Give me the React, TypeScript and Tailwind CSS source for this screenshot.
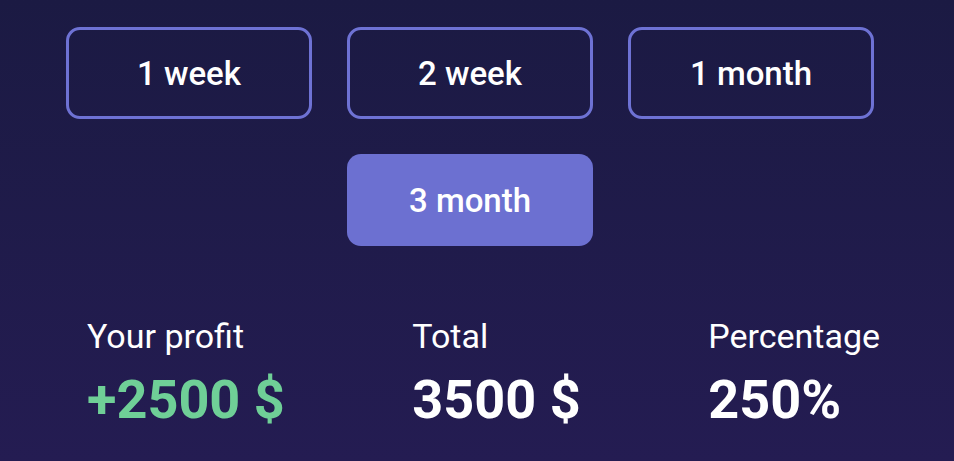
import React from "react";

const periods = ["1 week", "2 week", "1 month", "3 month"];

const stats = [
  { label: "Your profit", value: "+2500 $", color: "text-[#6fcf97]" },
  { label: "Total", value: "3500 $", color: "text-white" },
  { label: "Percentage", value: "250%", color: "text-white" },
];

const App = () => {
  const active = "3 month";

  return (
    <div
      className="w-[954px] h-[461px] overflow-hidden bg-gradient-to-b from-[#1b1a43] to-[#241c52] text-white"
      style={{ fontFamily: "Roboto, 'Liberation Sans', sans-serif" }}
    >
      <div className="flex flex-wrap justify-center gap-[35px] w-[808px] ml-[66px] pt-[27px]">
        {periods.map((p) => (
          <button
            key={p}
            className={
              p == active
                ? "w-[246px] h-[92px] rounded-[14px] bg-[#6c70d1] text-[33px] font-medium pt-[2px]"
                : "w-[246px] h-[92px] rounded-[14px] border-[3px] border-[#6e72d4] text-[33px] font-medium pt-[2px]"
            }
          >
            {p}
          </button>
        ))}
      </div>
      <div className="flex justify-between pl-[87px] pr-[74px] mt-[70px]">
        {stats.map((s) => (
          <div key={s.label} className="flex flex-col">
            <span className="text-[34px] leading-[40px]">{s.label}</span>
            <span className={`text-[54px] leading-[60px] font-bold mt-[14px] ${s.color}`}>
              {s.value}
            </span>
          </div>
        ))}
      </div>
    </div>
  );
};

export default App;
